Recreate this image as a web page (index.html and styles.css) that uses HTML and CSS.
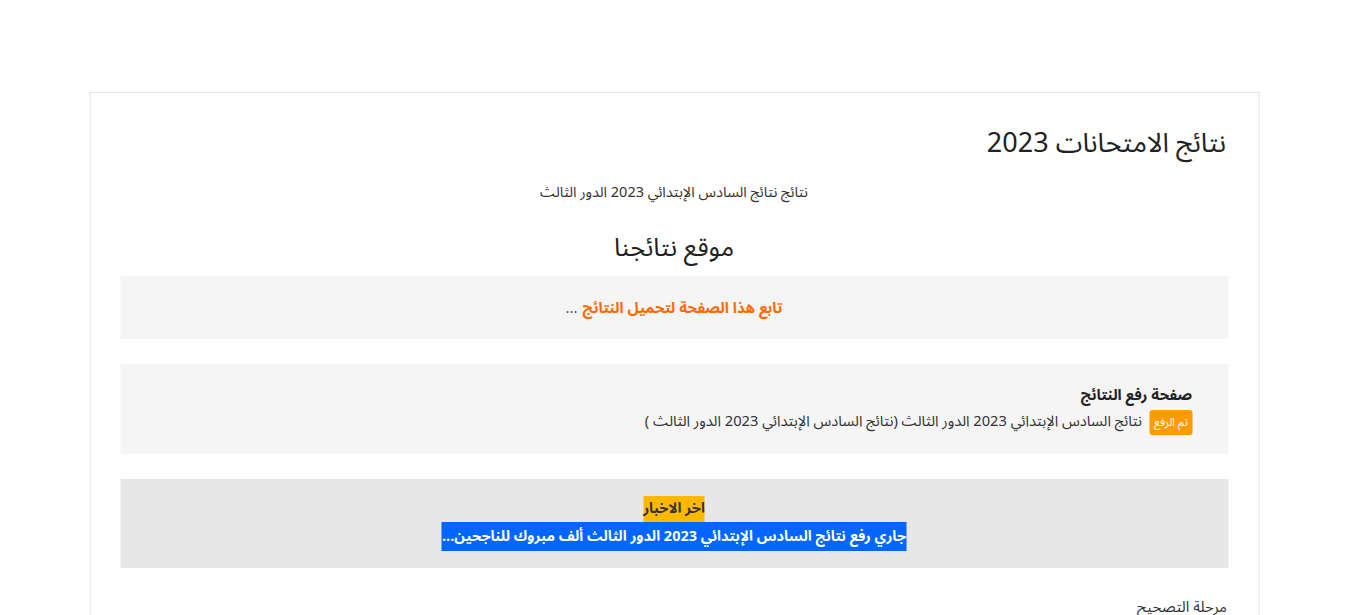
FILE: index.html
```html
<!DOCTYPE html>
<html lang="ar" dir="rtl">
<head>
<meta charset="utf-8">
<title>نتائج الامتحانات 2023</title>
<link rel="stylesheet" href="styles.css">
</head>
<body>
<div class="page">
  <main class="card">
    <h1 class="title">نتائج الامتحانات 2023</h1>
    <p class="subtitle">نتائج نتائج السادس الإبتدائي 2023 الدور الثالث</p>
    <h2 class="site">موقع نتائجنا</h2>
    <div class="box box-follow">
      <span class="follow">تابع هذا الصفحة لتحميل النتائج</span> <span class="dots">...</span>
    </div>
    <div class="box box-upload">
      <div class="upload-title">صفحة رفع النتائج</div>
      <div class="upload-line"><span class="badge">تم الرفع</span><span class="upload-text">نتائج السادس الإبتدائي 2023 الدور الثالث (نتائج السادس الإبتدائي 2023 الدور الثالث )</span></div>
    </div>
    <div class="box box-news">
      <div class="news-label">اخر الاخبار</div>
      <div class="news-text">جاري رفع نتائج السادس الإبتدائي 2023 الدور الثالث ألف مبروك للناجحين...</div>
    </div>
    <p class="stage">مرحلة التصحيح</p>
  </main>
</div>
</body>
</html>
```

FILE: styles.css
```css
html, body {
  margin: 0;
  padding: 0;
  background: #ffffff;
}
body {
  font-family: "Noto Sans Arabic", "DejaVu Sans", "Noto Sans", sans-serif;
  color: #222222;
  direction: rtl;
}
.page {
  padding-top: 92px;
}
.card {
  width: 1108px;
  margin: 0 auto;
  border: 1px solid #e3e3e3;
  border-bottom: none;
  padding: 30px 30px 40px;
  box-sizing: content-box;
  transform: translateX(-0.5px);
}
.title {
  margin: 2px 0 0;
  font-size: 27px;
  font-weight: 400;
  line-height: 38px;
  color: #222;
  padding-right: 2px;
}
.subtitle {
  margin: 18px 0 0;
  text-align: center;
  font-size: 14.5px;
  line-height: 24px;
  color: #333;
}
.site {
  margin: 26px 0 0;
  text-align: center;
  font-size: 25.5px;
  font-weight: 400;
  line-height: 34px;
  color: #222;
}
.box {
  background: #f5f5f5;
}
.box-follow {
  margin-top: 11px;
  height: 63px;
  display: flex;
  align-items: center;
  justify-content: center;
  gap: 5px;
  font-size: 15px;
}
.follow {
  color: #ff6a00;
  font-weight: 700;
}
.dots {
  color: #555;
}
.box-upload {
  margin-top: 25px;
  height: 90px;
  box-sizing: border-box;
  padding: 18px 36px 0;
}
.upload-title {
  font-weight: 700;
  font-size: 15px;
  line-height: 26px;
  color: #222;
}
.upload-line {
  display: flex;
  align-items: center;
  gap: 8px;
  margin-top: 1px;
  font-size: 14.7px;
  line-height: 26px;
  color: #333;
}
.badge {
  background: #ff9a00;
  color: #ffffff;
  font-size: 11.5px;
  line-height: 25px;
  padding: 0 4px;
  border-radius: 3px;
}
.box-news {
  margin-top: 25px;
  height: 89px;
  box-sizing: border-box;
  padding-top: 17px;
  background: #e7e7e7;
  font-size: 14.5px;
  font-weight: 700;
}
.news-label {
  width: fit-content;
  margin: 0 auto;
  background: #ffb800;
  color: #333;
  line-height: 26px;
}
.news-text {
  width: fit-content;
  margin: 0 auto;
  background: #0066ff;
  color: #ffffff;
  line-height: 29px;
}
.stage {
  margin: 27px 0 0;
  padding-right: 1px;
  font-size: 15px;
  line-height: 24px;
  color: #333;
}
```
